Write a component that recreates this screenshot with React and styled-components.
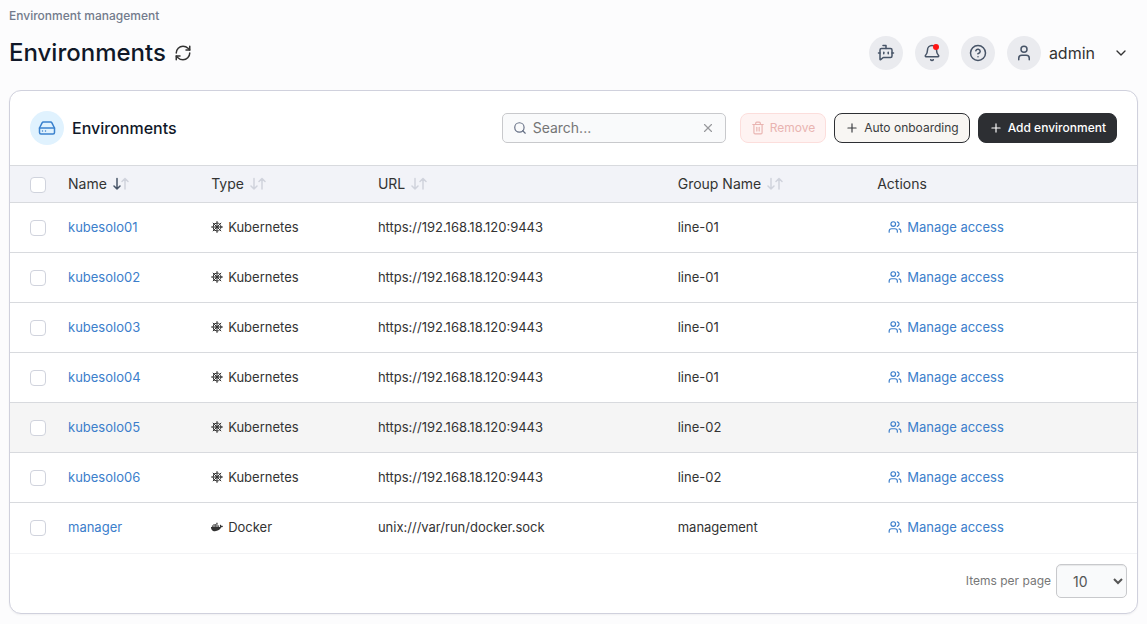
import React from "react";
import styled, { createGlobalStyle, css } from "styled-components";
import {
  Bell,
  BotMessageSquare,
  ChevronDown,
  CircleHelp,
  HardDrive,
  Plus,
  RefreshCw,
  Search,
  Trash2,
  User,
  Users,
  X,
} from "lucide-react";
import { FaDocker } from "react-icons/fa";

const GlobalStyle = createGlobalStyle`
  *, *::before, *::after { box-sizing: border-box; }
  body {
    margin: 0;
    background: #fcfcfd;
    color: #333333;
    font-family: Inter, "Liberation Sans", sans-serif;
    font-size: 13px;
    line-height: 20px;
  }
  button, input, select { font: inherit; color: inherit; }
  svg { display: block; flex: none; }
`;

const Page = styled.main`
  padding: 6px 9px 10px;
`;

const Breadcrumb = styled.nav`
  font-size: 12px;
  font-weight: 500;
  color: #737b8c;
`;

const TitleBar = styled.header`
  display: flex;
  align-items: center;
  justify-content: space-between;
  height: 54px;
  margin-bottom: 10px;
`;

const TitleGroup = styled.div`
  display: flex;
  align-items: center;
  gap: 8px;
`;

const Title = styled.h1`
  margin: 0;
  font-size: 24px;
  line-height: 32px;
  font-weight: 500;
  color: #101828;
`;

const IconButton = styled.button`
  display: flex;
  padding: 0;
  border: 0;
  background: none;
  color: ${(p) => p.$color || "#333333"};
  cursor: pointer;
`;

const UserTools = styled.div`
  display: flex;
  align-items: center;
  gap: 12px;
`;

const Round = css`
  display: flex;
  align-items: center;
  justify-content: center;
  width: 34px;
  height: 34px;
  border-radius: 50%;
`;

const RoundButton = styled.button`
  ${Round}
  position: relative;
  padding: 0;
  border: 0;
  background: #eaebef;
  color: #475467;
  cursor: pointer;
`;

const AlertDot = styled.span`
  position: absolute;
  top: 8px;
  right: 10px;
  width: 6px;
  height: 6px;
  border-radius: 50%;
  background: #ff1414;
`;

const UserButton = styled.button`
  display: flex;
  align-items: center;
  gap: 8px;
  padding: 0 9px 0 0;
  border: 0;
  background: none;
  font-size: 16px;
  cursor: pointer;
`;

const UserBadge = styled.span`
  ${Round}
  background: #eaebef;
  color: #475467;
`;

const UserName = styled.span`
  margin-right: 10px;
`;

const Card = styled.section`
  border: 1px solid #d0d1dd;
  border-radius: 12px;
  background: #ffffff;
  box-shadow: 0 1px 2px rgba(16, 24, 40, 0.05);
  overflow: hidden;
`;

const CardHeader = styled.div`
  display: flex;
  align-items: center;
  justify-content: space-between;
  height: 74px;
  padding: 0 20px;
`;

const CardTitle = styled.h2`
  display: flex;
  align-items: center;
  gap: 8px;
  margin: 0;
  font-size: 16px;
  font-weight: 500;
  color: #101828;
`;

const CardBadge = styled.span`
  ${Round}
  background: #e0f2fe;
  color: #3b82ce;
`;

const Toolbar = styled.div`
  display: flex;
  align-items: center;
  gap: 8px;
`;

const SearchBox = styled.label`
  display: flex;
  align-items: center;
  gap: 6px;
  width: 224px;
  height: 30px;
  margin-right: 6px;
  padding: 0 10px;
  border: 1px solid #c8c9cc;
  border-radius: 5px;
  background: #f9fafb;
  color: #667085;
`;

const SearchInput = styled.input`
  flex: 1;
  min-width: 0;
  padding: 0;
  border: 0;
  outline: 0;
  background: none;
  font-size: 14px;
  &::placeholder { color: #757575; opacity: 1; }
`;

const variants = {
  danger: css`
    border-color: #fcdedc;
    background: #fef3f2;
    color: #e9b4b1;
  `,
  outline: css`
    border-color: #2d2f33;
    background: #f8f6f3;
    color: #3a3c40;
  `,
  primary: css`
    border-color: #2d2f33;
    background: #2d2f33;
    color: #ffffff;
    font-weight: 500;
  `,
};

const Button = styled.button`
  display: flex;
  align-items: center;
  gap: 5px;
  height: 30px;
  padding: 0 10px;
  border: 1px solid;
  border-radius: 8px;
  font-size: 12px;
  white-space: nowrap;
  ${(p) => variants[p.$variant]}
`;

const Table = styled.table`
  width: 100%;
  table-layout: fixed;
  border-collapse: separate;
  border-spacing: 0;
`;

const Col = styled.col`
  width: ${(p) => p.$width};
`;

const HeadCell = styled.th`
  height: 38px;
  padding: 0 0 0 ${(p) => (p.$check ? "20px" : "10px")};
  border-top: 1px solid #d8dade;
  border-bottom: 1px solid #d8dade;
  background: #f2f3f8;
  font-size: 14px;
  font-weight: 400;
  text-align: left;
`;

const SortButton = styled.button`
  display: flex;
  align-items: center;
  gap: 6px;
  padding: 0;
  border: 0;
  background: none;
  cursor: pointer;
`;

const Row = styled.tr`
  background: ${(p) => (p.$active ? "#f5f5f5" : "#ffffff")};
`;

const Cell = styled.td`
  height: 50px;
  padding: 0 0 1px ${(p) => (p.$check ? "20px" : "10px")};
  border-bottom: 1px solid #d8dade;
  ${Row}:last-child & {
    height: 51px;
    padding-bottom: 2px;
    border-color: #f2f3f5;
  }
`;

const Checkbox = styled.input`
  display: block;
  appearance: none;
  width: 16px;
  height: 16px;
  margin: 2px 0 0;
  border: 1px solid #d0d3dd;
  border-radius: 4px;
  background: #ffffff;
`;

const Link = styled.a`
  display: flex;
  width: fit-content;
  align-items: center;
  gap: 5px;
  color: #3b7ecb;
  text-decoration: none;
`;

const ActionCell = styled(Cell)`
  padding-left: 21px;
`;

const TypeLabel = styled.span`
  display: flex;
  align-items: center;
  gap: 5px;
`;

const Footer = styled.div`
  display: flex;
  align-items: center;
  justify-content: flex-end;
  padding: 10px 10px 15px;
`;

const PageSize = styled.label`
  display: flex;
  align-items: center;
  gap: 5px;
  font-size: 12px;
  color: #777777;
`;

const Select = styled.select`
  width: 71px;
  height: 34px;
  padding: 0 0 0 12px;
  border: 1px solid #c8c9cc;
  border-radius: 5px;
  background: #f9fafb;
  box-shadow: inset 0 1px 1px rgba(0, 0, 0, 0.075);
  color: #555555;
  font-size: 14px;
`;

const columns = ["Name", "Type", "URL", "Group Name"];

const environments = [
  ...["01", "02", "03", "04", "05", "06"].map((n) => ({
    name: `kubesolo${n}`,
    type: "Kubernetes",
    url: "https://192.168.18.120:9443",
    group: n < "05" ? "line-01" : "line-02",
    active: n === "05",
  })),
  { name: "manager", type: "Docker", url: "unix:///var/run/docker.sock", group: "management" },
];

function SortArrows({ sorted }) {
  return (
    <svg width="16" height="14" viewBox="0 0 16 14" fill="none" strokeWidth="1.5" strokeLinecap="round" strokeLinejoin="round" aria-hidden="true">
      <path d="M4 1.5v10.500M1 9l3 3 3-3" stroke={sorted ? "#475467" : "#d0d3dc"} />
      <path d="M12 12V1.500M9 4.500l3-3 3 3" stroke="#d0d3dc" />
    </svg>
  );
}

function HelmIcon() {
  return (
    <svg width="12" height="12" viewBox="0 0 24 24" fill="none" stroke="currentColor" strokeWidth="2" strokeLinecap="round" aria-hidden="true">
      <circle cx="12" cy="12" r="8" />
      <circle cx="12" cy="12" r="2" fill="currentColor" />
      <path d="M12 1v22M1 12h22M4.200 4.200l15.600 15.600M19.800 4.200L4.200 19.800" />
    </svg>
  );
}

export default function App() {
  return (
    <Page>
      <GlobalStyle />
      <Breadcrumb aria-label="Breadcrumb">Environment management</Breadcrumb>
      <TitleBar>
        <TitleGroup>
          <Title>Environments</Title>
          <IconButton aria-label="Refresh"><RefreshCw size={18} /></IconButton>
        </TitleGroup>
        <UserTools>
          <RoundButton aria-label="Assistant"><BotMessageSquare size={18} /></RoundButton>
          <RoundButton aria-label="Notifications"><Bell size={18} /><AlertDot /></RoundButton>
          <RoundButton aria-label="Help"><CircleHelp size={18} /></RoundButton>
          <UserButton>
            <UserBadge><User size={18} /></UserBadge>
            <UserName>admin</UserName>
            <ChevronDown size={16} />
          </UserButton>
        </UserTools>
      </TitleBar>

      <Card>
        <CardHeader>
          <CardTitle>
            <CardBadge><HardDrive size={18} /></CardBadge>
            Environments
          </CardTitle>
          <Toolbar>
            <SearchBox>
              <Search size={14} />
              <SearchInput placeholder="Search..." aria-label="Search" />
              <IconButton $color="#98999c" aria-label="Clear search"><X size={14} /></IconButton>
            </SearchBox>
            <Button $variant="danger" disabled><Trash2 size={14} />Remove</Button>
            <Button $variant="outline"><Plus size={14} />Auto onboarding</Button>
            <Button $variant="primary"><Plus size={14} />Add environment</Button>
          </Toolbar>
        </CardHeader>

        <Table>
          <colgroup>
            <Col $width="48px" />
            <Col $width="12.7%" />
            <Col $width="14.8%" />
            <Col $width="26.6%" />
            <Col $width="17.7%" />
            <Col />
          </colgroup>
          <thead>
            <tr>
              <HeadCell $check><Checkbox type="checkbox" aria-label="Select all" /></HeadCell>
              {columns.map((label, i) => (
                <HeadCell key={label}>
                  <SortButton>{label}<SortArrows sorted={i === 0} /></SortButton>
                </HeadCell>
              ))}
              <HeadCell>Actions</HeadCell>
            </tr>
          </thead>
          <tbody>
            {environments.map((env) => (
              <Row key={env.name} $active={env.active}>
                <Cell $check><Checkbox type="checkbox" aria-label={`Select ${env.name}`} /></Cell>
                <Cell><Link href="#">{env.name}</Link></Cell>
                <Cell>
                  <TypeLabel>
                    {env.type === "Docker" ? <FaDocker size={12} /> : <HelmIcon />}
                    {env.type}
                  </TypeLabel>
                </Cell>
                <Cell>{env.url}</Cell>
                <Cell>{env.group}</Cell>
                <ActionCell><Link href="#"><Users size={14} />Manage access</Link></ActionCell>
              </Row>
            ))}
          </tbody>
        </Table>

        <Footer>
          <PageSize>
            Items per page
            <Select defaultValue="10">
              <option>10</option>
              <option>25</option>
              <option>50</option>
              <option>100</option>
            </Select>
          </PageSize>
        </Footer>
      </Card>
    </Page>
  );
}
